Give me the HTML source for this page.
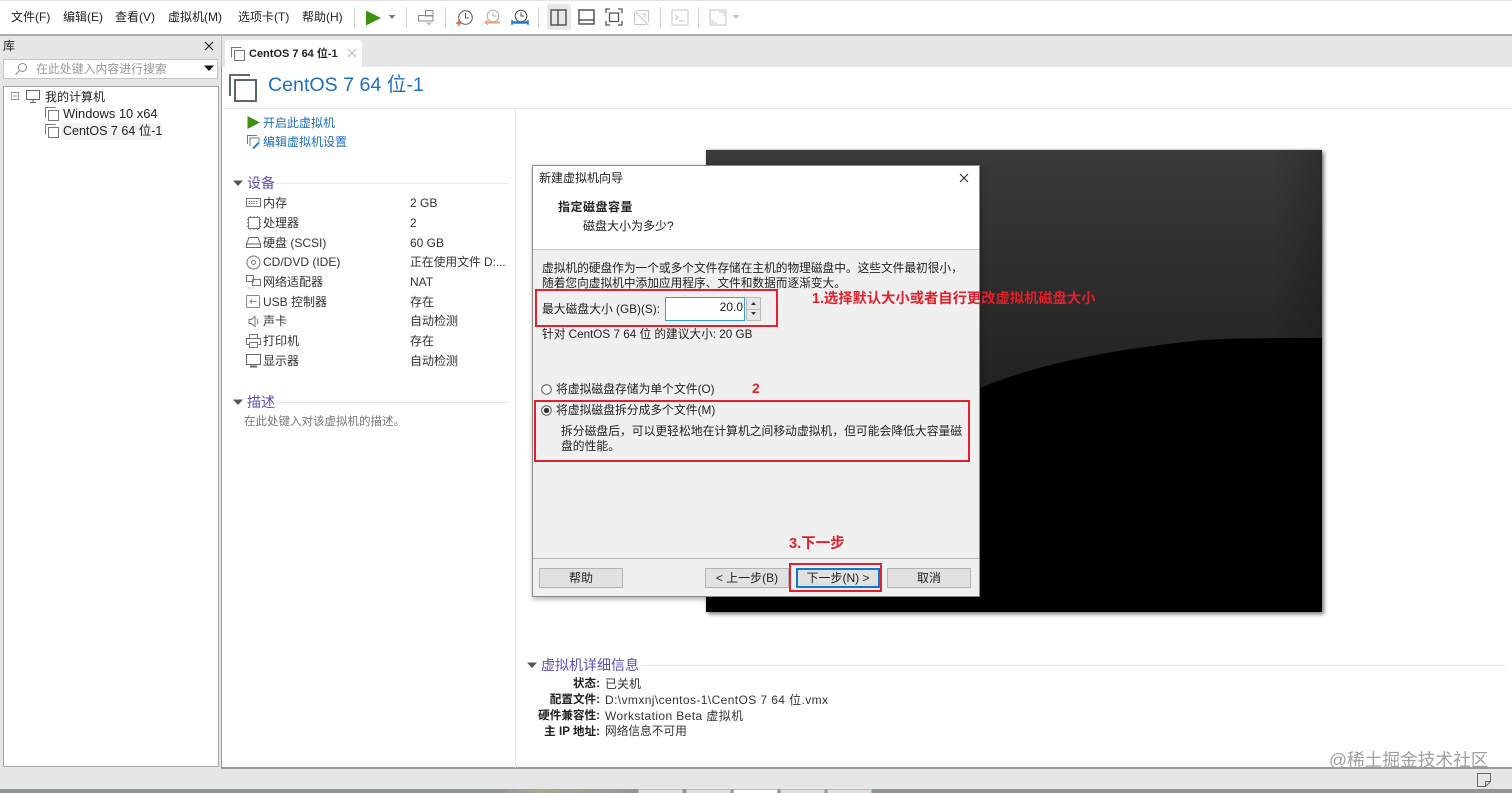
<!DOCTYPE html>
<html lang="zh"><head><meta charset="utf-8"><title>VMware</title>
<style>
html{margin:0;padding:0;width:1512px;height:793px;overflow:hidden;background:#e5e6e7}
body{margin:0;padding:0;width:1512px;height:793px;overflow:hidden;background:#e5e6e7;position:relative;font-family:"Liberation Sans","Noto Sans CJK SC",sans-serif;font-size:12px;color:#222;filter:blur(.3px)}
.a,.t,svg.i{position:absolute}
.t{white-space:nowrap;line-height:18px;height:18px}
.lk{color:#1f6fc0}.h{font-size:14px;color:#5c50b4}.d{color:#333}
.r{color:#e0202c;font-weight:bold}
.rb{position:absolute;border:2px solid #e0222e;box-sizing:border-box}
.btn{position:absolute;top:568px;height:20px;width:84px;box-sizing:border-box;background:#e1e1e1;border:1px solid #b4b4b4;text-align:center;line-height:18px;color:#222}
.sep{position:absolute;top:7px;height:21px;width:1px;background:#d4d4d4}
svg.i{fill:none;stroke:#555;stroke-width:1}
.bt{position:absolute;top:789px;height:4px;width:45px;box-sizing:border-box;border:1px solid #b8bcbc;border-bottom:0;background:#dfe1e1}
.bl{font-weight:bold;font-size:11.600px}
.ls{letter-spacing:.4px}
</style></head><body>
<svg width="0" height="0" style="position:absolute"><defs>
<symbol id="vm" viewBox="0 0 16 16"><path d="M1.500 11.500V1.500H11.500" fill="none" stroke="#777"/><rect x="4.500" y="4.500" width="10" height="10" fill="#fff" stroke="#777"/></symbol>
</defs></svg>

<!-- toolbar -->
<div class="a" style="left:0;top:0;width:1512px;height:34px;background:#fff;border-top:1px solid #e4e4e4;box-sizing:border-box"></div>
<div class="a" style="left:0;top:34px;width:1512px;height:1.500px;background:#adadad"></div>
<div class="t" style="left:11px;top:8px">文件(F)</div>
<div class="t" style="left:63px;top:8px">编辑(E)</div>
<div class="t" style="left:115px;top:8px">查看(V)</div>
<div class="t" style="left:168px;top:8px">虚拟机(M)</div>
<div class="t" style="left:238px;top:8px">选项卡(T)</div>
<div class="t" style="left:302px;top:8px">帮助(H)</div>
<div class="sep" style="left:354px"></div>
<svg class="i" style="left:364px;top:9px;stroke:none" width="18" height="18"><path d="M2 1.500L17 9 2 16.500z" fill="#3f8f10"/></svg>
<svg class="i" style="left:388px;top:14px;stroke:none" width="9" height="6"><path d="M0.500 1h7L4 5z" fill="#777"/></svg>
<div class="sep" style="left:406px"></div>
<svg class="i" style="left:417px;top:9px;stroke:#888" width="18" height="18"><path d="M8.500 1.500h7.500v5.500h-7.500zM1.500 6.500h14.500v5.500h-14.500z"/><path d="M9 13.500h6l-3 3z" fill="#bbb" stroke="none"/></svg>
<div class="sep" style="left:445px"></div>
<svg class="i" style="left:455px;top:9px" width="19" height="18"><circle cx="10.500" cy="8.500" r="6.800"/><path d="M10.500 4v5h3.500"/><path d="M1 14h6M4 11v6" stroke="#d9663a" stroke-width="1.500"/></svg>
<svg class="i" style="left:484px;top:9px;stroke:#aaa" width="18" height="18"><circle cx="9" cy="7" r="5.800"/><path d="M9 3.500V7h3"/><path d="M1 13.500h15" stroke="#ef9a70" stroke-width="2"/><path d="M4 11l-3 2.500 3 2.500" stroke="#ef9a70"/></svg>
<svg class="i" style="left:511px;top:9px;stroke:#444" width="18" height="18"><circle cx="10" cy="7" r="5.800"/><path d="M10 3.500V7h3"/><path d="M1 13.500h16" stroke="#1f7fc4" stroke-width="2.500"/><path d="M1 11v5M17 11v5" stroke="#1f7fc4" stroke-width="1.500"/></svg>
<div class="sep" style="left:538px"></div>
<div class="a" style="left:547px;top:4px;width:24px;height:26px;background:#e8e8e8;border-radius:2px"></div>
<svg class="i" style="left:550px;top:9px;stroke:#555;stroke-width:1.500" width="17" height="17"><rect x="1" y="1" width="15" height="15"/><path d="M8 1v15"/></svg>
<svg class="i" style="left:578px;top:9px;stroke:#555;stroke-width:1.500" width="17" height="17"><rect x="1" y="1" width="15" height="14"/><path d="M1 11h15"/></svg>
<svg class="i" style="left:605px;top:8px;stroke:#555;stroke-width:1.300" width="18" height="18"><rect x="4.500" y="5" width="9" height="8.500"/><path d="M1 5V1h4M13 1h4v4M17 13v4h-4M5 17H1v-4"/></svg>
<svg class="i" style="left:633px;top:9px;stroke:#c4c4c4" width="17" height="17"><path d="M4 1.500h11.500V13M1.500 4v11.500H13M1.500 1.500l14 15M8 5h4v4" /></svg>
<div class="sep" style="left:660px"></div>
<svg class="i" style="left:671px;top:9px;stroke:#c4c4c4" width="18" height="17"><rect x="1" y="1" width="16" height="15"/><path d="M4 6l3 2.500-3 2.500M8 12h5"/></svg>
<div class="sep" style="left:698px"></div>
<svg class="i" style="left:709px;top:9px;stroke:#c4c4c4" width="18" height="17"><rect x="1" y="1" width="16" height="15"/><path d="M10 3h5v4M8 14H3v-4"/></svg>
<svg class="i" style="left:732px;top:14px;stroke:none" width="9" height="6"><path d="M0.500 1h7L4 5z" fill="#c4c4c4"/></svg>

<!-- library -->
<div class="t" style="left:3px;top:37px;font-size:12px">库</div>
<svg class="i" style="left:204px;top:41px;stroke:#222;stroke-width:1.200" width="10" height="10"><path d="M1 1l8 8M9 1L1 9"/></svg>
<div class="a" style="left:3px;top:59px;width:215px;height:20px;background:#fff;border:1px solid #c4c4c4;box-sizing:border-box"></div>
<svg class="i" style="left:14px;top:62px;stroke:#888" width="14" height="14"><circle cx="8.500" cy="5.500" r="4"/><path d="M5.500 8.500L1.500 12.500"/></svg>
<div class="t" style="left:36px;top:60px;font-size:11.900px;color:#999">在此处键入内容进行搜索</div>
<svg class="i" style="left:204px;top:65px;stroke:none" width="11" height="7"><path d="M0 0.500h10L5 6z" fill="#111"/></svg>
<div class="a" style="left:3px;top:86px;width:216px;height:681px;background:#fff;border:1px solid #a5a5a5;box-sizing:border-box"></div>
<svg class="i" style="left:11px;top:92px;stroke:#999" width="9" height="9"><rect x="0.500" y="0.500" width="7" height="7"/><path d="M2 4h4"/></svg>
<svg class="i" style="left:26px;top:90px;stroke:#666" width="15" height="14"><rect x="0.500" y="0.500" width="13" height="9"/><path d="M7 10v2M4 12.500h6"/></svg>
<div class="t" style="left:45px;top:88px;font-size:12px">我的计算机</div>
<svg class="i" style="left:44px;top:106px;stroke:none" width="16" height="16"><use href="#vm"/></svg>
<div class="t" style="left:63px;top:105px;font-size:12.900px">Windows 10 x64</div>
<div class="a" style="left:61px;top:123px;width:101px;height:17px;background:#f2f2f2"></div>
<svg class="i" style="left:44px;top:123px;stroke:none" width="16" height="16"><use href="#vm"/></svg>
<div class="t" style="left:63px;top:122px;font-size:12.500px">CentOS 7 64 位-1</div>

<!-- main panel -->
<div class="a" style="left:221px;top:35px;width:1px;height:32px;background:#bdbdbd"></div>
<div class="a" style="left:221px;top:67px;width:1291px;height:702px;background:#fff;border-left:1px solid #9a9a9a;border-bottom:2px solid #9a9a9a;box-sizing:border-box"></div>
<div class="a" style="left:225px;top:40px;width:137px;height:28px;background:#fff;border-radius:3px 3px 0 0"></div>
<svg class="i" style="left:230px;top:46px;stroke:none" width="16" height="16"><use href="#vm"/></svg>
<div class="t" style="left:249px;top:45px;font-size:11px;font-weight:bold">CentOS 7 64 位-1</div>
<svg class="i" style="left:347px;top:48px;stroke:#bbb" width="10" height="10"><path d="M1 1l8 8M9 1L1 9"/></svg>
<svg class="i" style="left:229px;top:73px;stroke:#4a5560;stroke-width:1.800" width="29" height="29"><path d="M1 23V2h20" stroke="#4a5560"/><rect x="6" y="7" width="21" height="21" fill="#fff"/></svg>
<div class="t" style="left:268px;top:72px;height:26px;line-height:26px;font-size:19.600px;color:#1f6fc0">CentOS 7 64 位-1</div>
<div class="a" style="left:222px;top:108px;width:1290px;height:1px;background:#e8e8e8"></div>
<div class="a" style="left:515px;top:109px;width:1px;height:659px;background:#e8e8e8"></div>

<svg class="i" style="left:246px;top:115px;stroke:none" width="15" height="15"><path d="M1.500 1l12.500 6.500L1.500 14z" fill="#3f8f10"/></svg>
<div class="t lk" style="left:263px;top:114px">开启此虚拟机</div>
<svg class="i" style="left:246px;top:134px;stroke:#777" width="16" height="16"><path d="M1.500 10V1.500H11"/><path d="M4 12V4h9v4"/><path d="M7 14.500l6-6" stroke="#1f86c9" stroke-width="2"/></svg>
<div class="t lk" style="left:263px;top:133px">编辑虚拟机设置</div>

<!-- devices -->
<svg class="i" style="left:233px;top:180px;stroke:none" width="11" height="7"><path d="M0 0.500h10L5 6z" fill="#555"/></svg>
<div class="t h" style="left:247px;top:174px">设备</div>
<div class="a" style="left:276px;top:183px;width:232px;height:1px;background:#e6e6e6"></div>

<svg class="i" style="left:246px;top:197px;stroke:#777" width="15" height="13"><rect x="0.500" y="1.500" width="14" height="8"/><path d="M2.500 4.500h10M2.500 6.500h10" stroke-dasharray="1.500 1"/></svg>
<div class="t d" style="left:263px;top:194px">内存</div><div class="t d" style="left:410px;top:194px">2 GB</div>
<svg class="i" style="left:246px;top:215px;stroke:#777" width="16" height="16"><rect x="2.500" y="2.500" width="11" height="11"/><path d="M1 4.500h1M1 8h1M1 11.500h1M14 4.500h1M14 8h1M14 11.500h1M4.500 1v1M8 1v1M11.500 1v1M4.500 14v1M8 14v1M11.500 14v1"/></svg>
<div class="t d" style="left:263px;top:214px">处理器</div><div class="t d" style="left:410px;top:214px">2</div>
<svg class="i" style="left:246px;top:236px;stroke:#666" width="15" height="13"><path d="M0.500 8L3 1.500h9L14.500 8zM0.500 8v3.500h14V8"/></svg>
<div class="t d" style="left:263px;top:234px">硬盘 (SCSI)</div><div class="t d" style="left:410px;top:234px">60 GB</div>
<svg class="i" style="left:246px;top:255px;stroke:#777" width="15" height="15"><circle cx="7.500" cy="7.500" r="6.500"/><circle cx="7.500" cy="7.500" r="2"/></svg>
<div class="t d" style="left:263px;top:253px">CD/DVD (IDE)</div><div class="t d" style="left:410px;top:253px;font-size:11.800px">正在使用文件 D:...</div>
<svg class="i" style="left:246px;top:275px;stroke:#777" width="15" height="15"><rect x="0.500" y="0.500" width="7" height="6"/><rect x="6.500" y="4.500" width="8" height="6"/><path d="M1 13h8" stroke="#ccc"/></svg>
<div class="t d" style="left:263px;top:273px">网络适配器</div><div class="t d" style="left:410px;top:273px">NAT</div>
<svg class="i" style="left:246px;top:295px;stroke:#888" width="15" height="14"><rect x="0.500" y="0.500" width="13" height="12" rx="1"/><path d="M3.500 6.500h7M6 4.500l-2 2 2 2"/></svg>
<div class="t d" style="left:263px;top:293px">USB 控制器</div><div class="t d" style="left:410px;top:293px">存在</div>
<svg class="i" style="left:248px;top:315px;stroke:#777" width="12" height="13"><path d="M1 4.500h2.500L7 1.500v10l-3.500-3H1zM9 4c1 1.500 1 3.500 0 5"/></svg>
<div class="t d" style="left:263px;top:312px">声卡</div><div class="t d" style="left:410px;top:312px">自动检测</div>
<svg class="i" style="left:246px;top:334px;stroke:#777" width="15" height="14"><path d="M3.500 4.500v-4h8v4M3.500 10.500h-3v-6h14v6h-3M3.500 8.500h8v5h-8z"/></svg>
<div class="t d" style="left:263px;top:332px">打印机</div><div class="t d" style="left:410px;top:332px">存在</div>
<svg class="i" style="left:246px;top:354px;stroke:#666" width="16" height="14"><rect x="0.500" y="0.500" width="14" height="10"/><path d="M4 12.500h7" stroke-width="2"/></svg>
<div class="t d" style="left:263px;top:352px">显示器</div><div class="t d" style="left:410px;top:352px">自动检测</div>

<svg class="i" style="left:233px;top:399px;stroke:none" width="11" height="7"><path d="M0 0.500h10L5 6z" fill="#555"/></svg>
<div class="t h" style="left:247px;top:393px">描述</div>
<div class="a" style="left:276px;top:402px;width:232px;height:1px;background:#e6e6e6"></div>
<div class="t" style="left:244px;top:413px;font-size:11.500px;color:#777">在此处键入对该虚拟机的描述。</div>

<!-- VM screen -->
<div class="a" style="left:706px;top:150px;width:616px;height:462px;background:linear-gradient(180deg,#3a3a3a,#232323 50%);box-shadow:2px 2px 4px rgba(0,0,0,.55),0 -1px 2px rgba(0,0,0,.15)"></div>
<svg class="a" style="left:706px;top:150px" width="616" height="462"><path d="M0 462V330C70 310 200 270 274 238C330 215 400 200 497 190C530 188 575 188 616 188V462z" fill="#000"/></svg>
<div class="a" style="left:706px;top:150px;width:616px;height:188px;background:linear-gradient(90deg,rgba(0,0,0,0),rgba(0,0,0,0) 92%,rgba(0,0,0,.2))"></div>

<!-- details -->
<svg class="i" style="left:527px;top:662px;stroke:none" width="11" height="7"><path d="M0 0.500h10L5 6z" fill="#555"/></svg>
<div class="t h" style="left:541px;top:656px">虚拟机详细信息</div>
<div class="a" style="left:642px;top:665px;width:863px;height:1px;background:#e6e6e6"></div>
<div class="t bl" style="right:912px;top:675px">状态:</div><div class="t d" style="left:605px;top:675px">已关机</div>
<div class="t bl" style="right:912px;top:691px">配置文件:</div><div class="t d ls" style="left:605px;top:691px">D:\vmxnj\centos-1\CentOS 7 64 位.vmx</div>
<div class="t bl" style="right:912px;top:707px">硬件兼容性:</div><div class="t d ls" style="left:605px;top:707px">Workstation Beta 虚拟机</div>
<div class="t bl" style="right:912px;top:723px">主 IP 地址:</div><div class="t d" style="left:605px;top:723px;font-size:11.700px">网络信息不可用</div>

<!-- dialog -->
<div class="a" style="left:532px;top:165px;width:448px;height:432px;background:#f0f0f0;border:1px solid #8a8a8a;box-sizing:border-box;box-shadow:1px 2px 5px rgba(0,0,0,.35)"></div>
<div class="a" style="left:533px;top:166px;width:446px;height:83px;background:#fff;border-bottom:1px solid #c8c8c8"></div>
<div class="t" style="left:539px;top:169px">新建虚拟机向导</div>
<svg class="i" style="left:959px;top:173px;stroke:#222" width="10" height="10"><path d="M1 1l8 8M9 1L1 9"/></svg>
<div class="t" style="left:558px;top:198px;font-weight:bold;letter-spacing:.5px">指定磁盘容量</div>
<div class="t" style="left:583px;top:217px">磁盘大小为多少?</div>
<div class="t" style="left:542px;top:260px;font-size:11.700px">虚拟机的硬盘作为一个或多个文件存储在主机的物理磁盘中。这些文件最初很小&#xFF0C;</div>
<div class="t" style="left:542px;top:275px;font-size:11.700px">随着您向虚拟机中添加应用程序、文件和数据而逐渐变大。</div>
<div class="t" style="left:542px;top:300px;font-size:11.800px">最大磁盘大小 (GB)(S):</div>
<div class="a" style="left:665px;top:297px;width:80px;height:24px;background:#fff;border:1px solid #3e9ad6;box-sizing:border-box;text-align:right;padding-right:1px;line-height:19px">20.0</div>
<div class="a" style="left:746px;top:297px;width:15px;height:24px;background:#e6e6e6;border:1px solid #bbb;box-sizing:border-box"></div>
<div class="a" style="left:747px;top:309px;width:13px;height:1px;background:#bbb"></div>
<svg class="i" style="left:750px;top:301px;stroke:none" width="7" height="16"><path d="M3.500 1L6 4H1zM1 11h5l-2.500 3z" fill="#333"/></svg>
<div class="t" style="left:542px;top:326px;font-size:11.700px">针对 CentOS 7 64 位 的建议大小: 20 GB</div>
<svg class="i" style="left:541px;top:384px;stroke:#555" width="11" height="11"><circle cx="5.500" cy="5.500" r="4.800" fill="#fff"/></svg>
<div class="t" style="left:556px;top:380px;font-size:11.800px">将虚拟磁盘存储为单个文件(O)</div>
<svg class="i" style="left:541px;top:405px;stroke:#555" width="11" height="11"><circle cx="5.500" cy="5.500" r="4.800" fill="#fff"/><circle cx="5.500" cy="5.500" r="2.700" fill="#333" stroke="none"/></svg>
<div class="t" style="left:556px;top:401px;font-size:11.800px">将虚拟磁盘拆分成多个文件(M)</div>
<div class="t" style="left:561px;top:422px;font-size:11.800px">拆分磁盘后&#xFF0C;可以更轻松地在计算机之间移动虚拟机&#xFF0C;但可能会降低大容量磁</div>
<div class="t" style="left:561px;top:437px;font-size:11.800px">盘的性能。</div>
<div class="a" style="left:533px;top:558px;width:446px;height:1px;background:#b5b5b5"></div>
<div class="btn" style="left:539px">帮助</div>
<div class="btn" style="left:705px">&lt; 上一步(B)</div>
<div class="btn" style="left:796px;border:2px solid #0f78d0;line-height:16px">下一步(N) &gt;</div>
<div class="btn" style="left:887px">取消</div>

<!-- annotations -->
<div class="rb" style="left:535px;top:289px;width:243px;height:38px"></div>
<div class="rb" style="left:534px;top:400px;width:436px;height:62px"></div>
<div class="rb" style="left:789px;top:563px;width:93px;height:29px"></div>
<div class="t r" style="left:812px;top:290px;font-size:14.300px">1.选择默认大小或者自行更改虚拟机磁盘大小</div>
<div class="t r" style="left:752px;top:379px;font-size:14px">2</div>
<div class="t r" style="left:789px;top:535px;font-size:14.500px">3.下一步</div>

<!-- bottom -->
<div class="a" style="left:0;top:789px;width:1512px;height:4px;background:linear-gradient(90deg,#8d9696,#8d9696 500px,#a8a98e 540px,#8f9696 640px)"></div>
<div class="bt" style="left:638px"></div><div class="bt" style="left:686px"></div><div class="bt" style="left:733px;background:#fff"></div><div class="bt" style="left:780px"></div><div class="bt" style="left:827px"></div>
<svg class="i" style="left:1476px;top:772px;stroke:#666" width="16" height="16"><path d="M1.500 1.500h13v8l-5 5h-8zM9.500 14.500v-5h5"/></svg>
<div class="t" style="left:1329px;top:750px;height:20px;line-height:20px;font-size:17.700px;color:#a0a0a0">@稀土掘金技术社区</div>
</body></html>
